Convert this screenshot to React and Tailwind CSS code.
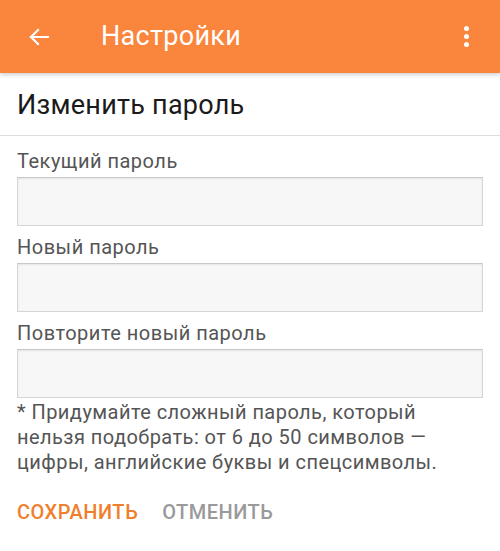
import { useState } from "react";

const FIELDS = [
  { id: "current", label: "Текущий пароль" },
  { id: "next", label: "Новый пароль" },
  { id: "repeat", label: "Повторите новый пароль" },
];

export default function App() {
  const [values, setValues] = useState({ current: "", next: "", repeat: "" });

  return (
    <div className="w-[500px] h-[551px] bg-white overflow-hidden font-['Roboto',sans-serif]">
      {/* header */}
      <div className="relative h-[73px] bg-[#fa853d] flex items-center shadow-[0_2px_4px_rgba(0,0,0,0.18)] z-10">
        <svg className="ml-[27px] w-[24px] h-[24px]" viewBox="0 0 24 24" fill="none" stroke="white" strokeWidth="2.2" strokeLinecap="square">
          <path d="M21 12H4M11 5l-7 7 7 7" />
        </svg>
        <h1 className="ml-[50px] text-[27px] tracking-[0.3px] text-white leading-none">Настройки</h1>
        <div className="ml-auto mr-[31px] flex flex-col gap-[3px]">
          <span className="w-[5px] h-[5px] rounded-full bg-white" />
          <span className="w-[5px] h-[5px] rounded-full bg-white" />
          <span className="w-[5px] h-[5px] rounded-full bg-white" />
        </div>
      </div>

      <div className="h-[63px] px-[17px] pt-[19px] border-b border-[#dedede]">
        <h2 className="text-[27px] tracking-[0.25px] text-[#1a1a1a] leading-none">Изменить пароль</h2>
      </div>

      <form className="px-[17px] pt-[13px]" onSubmit={(e) => e.preventDefault()}>
        {FIELDS.map((f) => (
          <div key={f.id} className="mb-[9px]">
            <label className="block text-[20px] tracking-[0.5px] text-[#555] leading-[24px] mb-[4px]">{f.label}</label>
            <input
              type="password"
              value={values[f.id]}
              onChange={(e) => setValues({ ...values, [f.id]: e.target.value })}
              className="block w-full h-[49px] bg-[#f7f7f7] border border-[#d6d6d6] border-t-[#c8c8c8] shadow-[inset_0_1px_2px_rgba(0,0,0,0.08)] outline-none px-2"
            />
          </div>
        ))}

        <p className="-mt-[7px] text-[20px] tracking-[0.45px] leading-[25px] text-[#555]">
          * Придумайте сложный пароль, который нельзя подобрать: от 6 до 50 символов — цифры, английские буквы и спецсимволы.
        </p>

        <div className="mt-[27px] flex gap-[24px] text-[20px] tracking-[0.5px] font-medium leading-none">
          <button type="submit" className="text-[#f07f2d]">СОХРАНИТЬ</button>
          <button type="button" className="text-[#9a9a9a]">ОТМЕНИТЬ</button>
        </div>
      </form>
    </div>
  );
}
